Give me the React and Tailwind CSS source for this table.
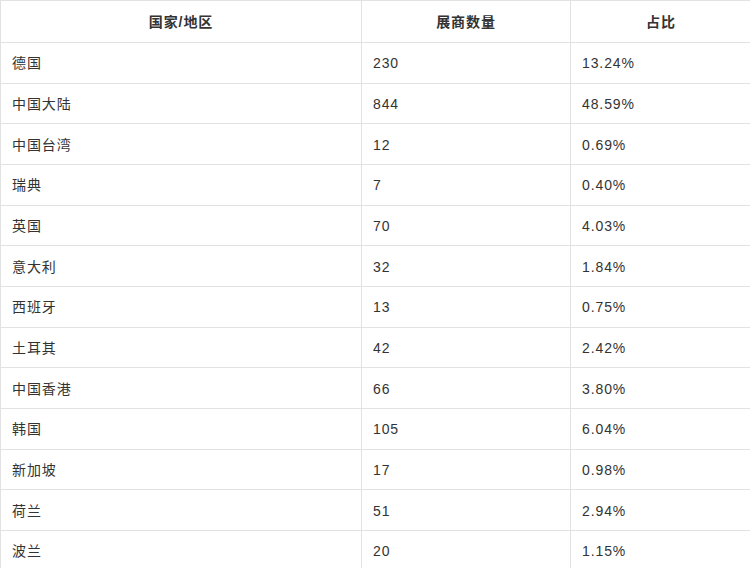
const rows = [
  ["德国", "230", "13.24%"],
  ["中国大陆", "844", "48.59%"],
  ["中国台湾", "12", "0.69%"],
  ["瑞典", "7", "0.40%"],
  ["英国", "70", "4.03%"],
  ["意大利", "32", "1.84%"],
  ["西班牙", "13", "0.75%"],
  ["土耳其", "42", "2.42%"],
  ["中国香港", "66", "3.80%"],
  ["韩国", "105", "6.04%"],
  ["新加坡", "17", "0.98%"],
  ["荷兰", "51", "2.94%"],
  ["波兰", "20", "1.15%"],
];

export default function App() {
  return (
    <div className="w-[750px] h-[568px] overflow-hidden bg-white">
      <table
        className="w-[751px] table-fixed border-collapse text-[14px] text-[#333] tracking-[0.9px]"
        style={{ fontFamily: '"Liberation Sans", "Noto Sans CJK SC", sans-serif' }}
      >
        <colgroup>
          <col className="w-[361px]" />
          <col className="w-[209px]" />
          <col className="w-[181px]" />
        </colgroup>
        <thead>
          <tr className="h-[42px]">
            {["国家/地区", "展商数量", "占比"].map((h) => (
              <th key={h} className="border border-[#e2e2e2] text-center font-bold px-3 pt-[2px] pb-0">
                {h}
              </th>
            ))}
          </tr>
        </thead>
        <tbody>
          {rows.map((r) => (
            <tr key={r[0]} className="h-[40.67px]">
              {r.map((c, i) => (
                <td key={i} className="border border-[#e2e2e2] pl-[11px] pr-3 pt-[2px] pb-0 text-left">
                  {c}
                </td>
              ))}
            </tr>
          ))}
        </tbody>
      </table>
    </div>
  );
}
